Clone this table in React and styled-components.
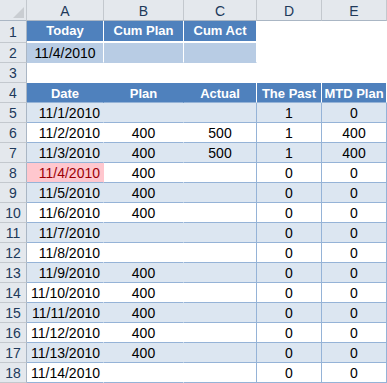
import React from "react";
import styled, { createGlobalStyle } from "styled-components";

const GlobalStyle = createGlobalStyle`
  html, body {
    margin: 0;
    padding: 0;
    background: #ffffff;
  }
  body {
    font-family: "Liberation Sans", Arial, sans-serif;
  }
`;

const columns = ["A", "B", "C", "D", "E"];

const rows = [
  { date: "11/1/2010", plan: "", actual: "", past: "1", mtd: "0" },
  { date: "11/2/2010", plan: "400", actual: "500", past: "1", mtd: "400" },
  { date: "11/3/2010", plan: "400", actual: "500", past: "1", mtd: "400" },
  { date: "11/4/2010", plan: "400", actual: "", past: "0", mtd: "0", today: true },
  { date: "11/5/2010", plan: "400", actual: "", past: "0", mtd: "0" },
  { date: "11/6/2010", plan: "400", actual: "", past: "0", mtd: "0" },
  { date: "11/7/2010", plan: "", actual: "", past: "0", mtd: "0" },
  { date: "11/8/2010", plan: "", actual: "", past: "0", mtd: "0" },
  { date: "11/9/2010", plan: "400", actual: "", past: "0", mtd: "0" },
  { date: "11/10/2010", plan: "400", actual: "", past: "0", mtd: "0" },
  { date: "11/11/2010", plan: "400", actual: "", past: "0", mtd: "0" },
  { date: "11/12/2010", plan: "400", actual: "", past: "0", mtd: "0" },
  { date: "11/13/2010", plan: "400", actual: "", past: "0", mtd: "0" },
  { date: "11/14/2010", plan: "", actual: "", past: "0", mtd: "0" },
];

const tones = {
  white: { bg: "#ffffff", fg: "#000000" },
  title: { bg: "#4f81bd", fg: "#ffffff" },
  soft: { bg: "#b8cce4", fg: "#000000" },
  band: { bg: "#dce6f1", fg: "#000000" },
  bad: { bg: "#ffc7ce", fg: "#9c0006" },
};

function App() {
  return (
    <>
      <GlobalStyle />
      <Sheet>
        <Corner>
          <svg width="11" height="11" viewBox="0 0 11 11">
            <polygon points="11,0 11,11 0,11" fill="#c9cdd2" />
          </svg>
        </Corner>
        {columns.map((c) => (
          <ColHead key={c}>{c}</ColHead>
        ))}

        <RowHead $tall>1</RowHead>
        <Cell $tone="title" $bold $right="#ffffff" $bottom="#ffffff" $tall>Today</Cell>
        <Cell $tone="title" $bold $right="#ffffff" $bottom="#ffffff" $tall>Cum Plan</Cell>
        <Cell $tone="title" $bold $right="#ffffff" $bottom="#ffffff" $tall>Cum Act</Cell>
        <Cell $tall />
        <Cell $tall />

        <RowHead>2</RowHead>
        <Cell $tone="soft" $right="#ffffff">11/4/2010</Cell>
        <Cell $tone="soft" $right="#ffffff" />
        <Cell $tone="soft" $right="#ffffff" />
        <Cell />
        <Cell />

        <RowHead>3</RowHead>
        <Cell />
        <Cell />
        <Cell />
        <Cell />
        <Cell />

        <RowHead>4</RowHead>
        <Cell $tone="title" $bold $bottom="#95b3d7">Date</Cell>
        <Cell $tone="title" $bold $bottom="#95b3d7">Plan</Cell>
        <Cell $tone="title" $bold $bottom="#95b3d7" $right="#ffffff">Actual</Cell>
        <Cell $tone="title" $bold $bottom="#95b3d7" $right="#ffffff">The Past</Cell>
        <Cell $tone="title" $bold $bottom="#95b3d7" $right="#ffffff">MTD Plan</Cell>

        {rows.map((r, i) => {
          const tone = i % 2 === 0 ? "band" : "white";
          return (
            <React.Fragment key={r.date}>
              <RowHead>{i + 5}</RowHead>
              <Cell $tone={r.today ? "bad" : tone} $bottom="#95b3d7" $align="flex-end">
                {r.date}
              </Cell>
              <Cell $tone={tone} $bottom="#95b3d7">{r.plan}</Cell>
              <Cell $tone={tone} $bottom="#95b3d7" $right="#95b3d7">{r.actual}</Cell>
              <Cell $tone={tone} $bottom="#95b3d7" $right="#95b3d7">{r.past}</Cell>
              <Cell $tone={tone} $bottom="#95b3d7" $right="#95b3d7">{r.mtd}</Cell>
            </React.Fragment>
          );
        })}
      </Sheet>
    </>
  );
}

const Sheet = styled.div`
  display: grid;
  grid-template-columns: 27px 77px 80px 73px 65px 65px;
  grid-template-rows: 21px 22px;
  grid-auto-rows: 20px;
  width: 387px;
  font-family: "Liberation Sans", Arial, sans-serif;
  font-size: 14px;
`;

const Corner = styled.div`
  display: flex;
  align-items: flex-end;
  justify-content: flex-end;
  padding: 0 2px 2px 0;
  box-sizing: border-box;
  background: #e4e8ed;
  border-right: 1px solid #c3c8ce;
  border-bottom: 1px solid #aab6c4;
`;

const ColHead = styled.div`
  display: flex;
  align-items: center;
  justify-content: center;
  box-sizing: border-box;
  background: #e4e8ed;
  color: #20395a;
  border-right: 1px solid #c3c8ce;
  border-bottom: 1px solid #aab6c4;
  padding-top: 1px;
`;

const RowHead = styled.div`
  display: flex;
  align-items: center;
  justify-content: center;
  box-sizing: border-box;
  background: #e4e8ed;
  color: #20395a;
  border-right: 1px solid #aab6c4;
  border-bottom: 1px solid #c3c8ce;
  padding-top: ${(p) => (p.$tall ? "0" : "1px")};
`;

const Cell = styled.div`
  display: flex;
  align-items: center;
  justify-content: ${(p) => p.$align || "center"};
  box-sizing: border-box;
  padding: ${(p) => (p.$tall ? "0 3px 1px" : "1px 3px 0")};
  background: ${(p) => tones[p.$tone || "white"].bg};
  color: ${(p) => tones[p.$tone || "white"].fg};
  font-weight: ${(p) => (p.$bold ? 700 : 400)};
  font-size: ${(p) => (p.$bold ? "13px" : "14px")};
  border-right: 1px solid ${(p) => p.$right || "transparent"};
  border-bottom: ${(p) => (p.$tall ? 2 : 1)}px solid ${(p) => p.$bottom || "transparent"};
  white-space: nowrap;
  overflow: hidden;
`;

export default App;
